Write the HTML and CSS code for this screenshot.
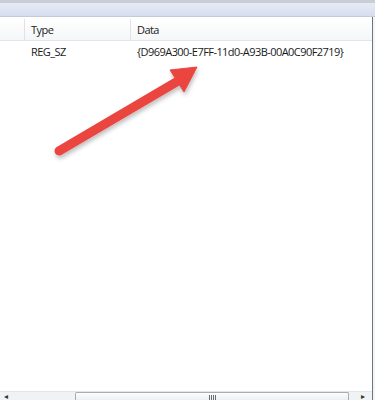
FILE: index.html
```html
<!DOCTYPE html>
<html lang="en">
<head>
    <meta charset="UTF-8">
    <title>Registry Editor</title>
    <link rel="stylesheet" href="styles.css">
</head>
<body>

    <div class="window">
        <!-- Title strip -->
        <div class="titlebar"></div>

        <div class="pane">
            <div class="list">
                <!-- Column headers -->
                <div class="row header">
                    <div class="col col-name"></div>
                    <div class="col col-type">Type</div>
                    <div class="col col-data">Data</div>
                </div>

                <!-- Values -->
                <div class="row item">
                    <div class="col col-name"></div>
                    <div class="col col-type">REG_SZ</div>
                    <div class="col col-data">{D969A300-E7FF-11d0-A93B-00A0C90F2719}</div>
                </div>

                <div class="spacer"></div>

                <!-- Horizontal scrollbar -->
                <div class="hscroll">
                    <span class="arrow-btn left">&#9666;</span>
                    <div class="track">
                        <div class="thumb"><span class="grip"></span></div>
                    </div>
                    <span class="arrow-btn">&#9656;</span>
                </div>
            </div>
            <div class="edge"></div>
        </div>

        <!-- Red pointer arrow -->
        <svg class="pointer" width="375" height="400" viewBox="0 0 375 400">
            <defs>
                <filter id="shade" x="-20%" y="-20%" width="140%" height="140%">
                    <feDropShadow dx="1" dy="3" stdDeviation="2" flood-color="#000" flood-opacity="0.25"/>
                </filter>
            </defs>
            <g filter="url(#shade)" fill="#eb4541" stroke="#eb4541">
                <line x1="59" y1="151" x2="178" y2="81" stroke-width="9" stroke-linecap="round"/>
                <polygon points="197,67 170,70 184,92" stroke-width="1" stroke-linejoin="round"/>
            </g>
        </svg>
    </div>

</body>
</html>
```

FILE: styles.css
```css
/* General */
body {
    margin: 0;
    padding: 0;
    background: #ffffff;
    font-family: "Open Sans", "Noto Sans", sans-serif;
    font-size: 11px;
    letter-spacing: -0.55px;
    color: #1a1a1a;
}

.window {
    position: relative;
    width: 375px;
    height: 400px;
    display: flex;
    flex-direction: column;
    overflow: hidden;
}

/* Title strip */
.titlebar {
    height: 13px;
    border-top: 3px solid #c9ced6;
    background: linear-gradient(#e6ebf5, #d6deee);
    border-bottom: 1px solid #c4cbd8;
}

.pane {
    flex: 1;
    display: flex;
}

.list {
    flex: 1;
    display: flex;
    flex-direction: column;
}

.edge {
    width: 2px;
    background: #f3f4f6;
    border-left: 1px solid #6d7580;
}

/* Rows */
.row {
    display: flex;
}

.col {
    box-sizing: border-box;
    padding-left: 6px;
    white-space: nowrap;
}

.col-name {
    width: 25px;
}

.col-type {
    width: 106px;
}

.col-data {
    flex: 1;
}

.header {
    height: 21px;
    margin-top: 2px;
    background: linear-gradient(#ffffff, #f5f6f7);
    border-bottom: 1px solid #e1e4e8;
    align-items: center;
}

.header .col {
    height: 100%;
    display: flex;
    align-items: center;
    border-right: 1px solid #dfe2e6;
}

.header .col-data {
    border-right: none;
}

.item {
    height: 21px;
    align-items: center;
}

.spacer {
    flex: 1;
}

/* Scrollbar */
.hscroll {
    height: 8px;
    display: flex;
    align-items: flex-start;
    background: #f1f2f3;
    border-top: 1px solid #e4e6e8;
}

.arrow-btn {
    width: 18px;
    font-size: 8px;
    line-height: 8px;
    color: #333;
    text-align: center;
}

.arrow-btn.left {
    width: 75px;
    text-align: left;
    padding-left: 4px;
    box-sizing: border-box;
}

.track {
    flex: 1;
    display: flex;
    padding-right: 5px;
}

.thumb {
    flex: 1;
    height: 8px;
    box-sizing: border-box;
    border: 1px solid #a9adb3;
    border-bottom: none;
    border-radius: 2px 2px 0 0;
    background: linear-gradient(#fdfdfd, #eceef0);
    display: flex;
    justify-content: center;
    align-items: flex-end;
}

.grip {
    width: 7px;
    height: 5px;
    background: repeating-linear-gradient(90deg, #6a6e74 0 1px, transparent 1px 2px);
}

/* Overlay arrow */
.pointer {
    position: absolute;
    top: 0;
    left: 0;
    pointer-events: none;
}
```
